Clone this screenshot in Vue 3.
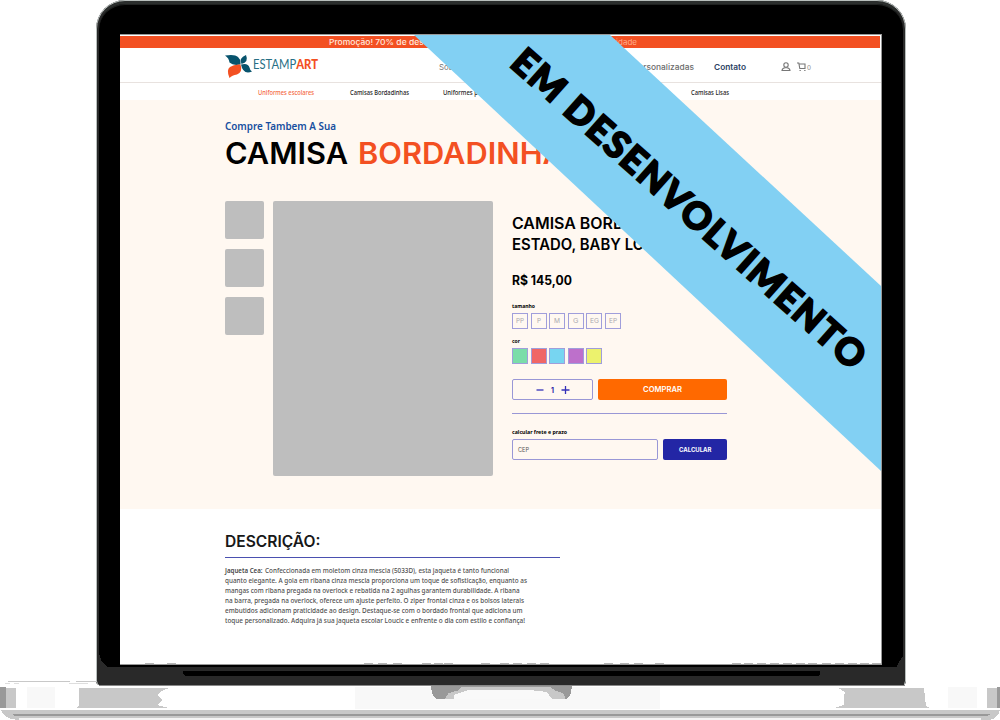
<script setup>
import { h } from 'vue'

// Single line of text fitted to a given width inside a fixed-height line box.
const Fit = (p) =>
  h('svg', { class: 'fit', width: p.w, height: p.lh, style: { display: 'block', overflow: 'visible', flex: 'none' } }, [
    h('text', {
      x: 0, y: p.base, 'font-size': p.size, 'font-weight': p.weight || 400,
      'font-family': p.fam || 'Inter, sans-serif', fill: p.color || '#000',
      textLength: p.w, lengthAdjust: 'spacingAndGlyphs'
    }, p.t)
  ])
Fit.props = ['w', 'lh', 'base', 'size', 'weight', 'fam', 'color', 't']

const cond = '"Noto Sans", sans-serif'
const sizes = [['PP', 8], ['P', 4], ['M', 6], ['G', 5.5], ['EG', 9], ['EP', 8]]
const colors = ['#7bdda9', '#f06666', '#77d5f1', '#bd70cb', '#ecf26d']
const lines = [
  ['quanto elegante. A gola em ribana cinza mescla proporciona um toque de sofisticação, enquanto as', 302],
  ['mangas com ribana pregada na overlock e rebatida na 2 agulhas garantem durabilidade. A ribana', 294.5],
  ['na barra, pregada na overlock, oferece um ajuste perfeito. O ziper frontal cinza e os bolsos laterais', 299],
  ['embutidos adicionam praticidade ao design. Destaque-se com o bordado frontal que adiciona um', 297.5],
  ['toque personalizado. Adquira já sua jaqueta escolar Loucic e enfrente o dia com estilo e confiança!', 300]
]
const specksAt = [145, 167, 364, 378, 393, 422, 434, 444, 481, 500, 513, 527, 540, 604, 620, 634, 655, 732, 744, 757, 770, 783, 796, 808, 822, 835, 848, 860, 872]
</script>

<template>
  <div class="stage">
    <div class="lid">
      <div class="screen">
        <div class="promo">
          <Fit class="promo-a" t="Promoção! 70% de desconto" :w="118" :lh="12" :base="8.800" :size="7.500" weight="500" color="#ffe9df" />
          <Fit class="promo-b" t="na quantidade" :w="54" :lh="12" :base="8.800" :size="7.500" color="#ffae8c" />
        </div>
        <header class="bar">
          <div class="brand">
            <svg width="28" height="24" viewBox="0 0 28 24">
              <path fill="#07536d" d="M0 .5Q10-1 13 2Q16 4.500 15.500 9.500Q8 11 4.500 7.500Q4 3 0 .5Z" />
              <path fill="#07536d" d="M21 0Q24 7 16.500 9Q13.500 3 21 0Z" />
              <path fill="#07536d" d="M16 9.500Q23 7.500 24.500 12.500Q25 15.500 27 16.500Q18 20 16 9.500Z" />
              <path fill="#f35022" d="M15.500 9.500Q18 17 12 19.500Q7 20 4.500 23Q1 15 5 12Q9 9 15.500 9.500Z" />
            </svg>
            <svg width="66" height="20">
              <text x="0" y="13.500" font-family="Lato, sans-serif" font-size="12.500" textLength="65" lengthAdjust="spacingAndGlyphs" fill="#286f85">ESTAMP<tspan font-weight="900" fill="#f35022">ART</tspan></text>
            </svg>
          </div>
          <Fit class="nav-a" t="Sobre" :w="22" :lh="14" :base="10" :size="8" color="#777" />
          <Fit class="nav-b" t="Personalizadas" :w="61" :lh="14" :base="10" :size="8" color="#6c6c6c" weight="500" />
          <Fit class="nav-c" t="Contato" :w="32" :lh="14" :base="10" :size="8" weight="600" color="#2b4364" />
          <svg class="user" width="10" height="10" viewBox="0 0 10 10" fill="none" stroke="#777" stroke-width="1.100">
            <circle cx="5" cy="3" r="2.200" /><path d="M1 8.500Q1.400 6 4 5.800H6Q8.600 6 9 8.500Z" />
          </svg>
          <svg class="cart" width="10" height="10" viewBox="0 0 10 10" fill="none" stroke="#777" stroke-width="1.100">
            <path d="M0 1H1.800L2.800 6.500H8V2H2" /><path d="M2.500 8.500h1.300M7.200 8.500h1.300" />
          </svg>
          <Fit class="count" t="0" :w="4" :lh="10" :base="7.500" :size="6" color="#888" />
        </header>
        <nav class="cats">
          <Fit t="Uniformes escolares" :w="56" :lh="12" :base="8.500" :size="6.800" weight="500" :fam="cond" color="#f4683f" />
          <Fit t="Camisas Bordadinhas" :w="59" :lh="12" :base="8.500" :size="6.800" weight="500" :fam="cond" color="#222" />
          <Fit t="Uniformes profissionais" :w="67" :lh="12" :base="8.500" :size="6.800" weight="500" :fam="cond" color="#222" />
          <Fit class="last" t="Camisas Lisas" :w="38" :lh="12" :base="8.500" :size="6.800" weight="500" :fam="cond" color="#222" />
        </nav>
        <main class="hero">
          <Fit class="kicker" t="Compre Tambem A Sua" :w="111" :lh="16" :base="12" :size="11.500" weight="600" :fam="cond" color="#174fa0" />
          <div class="title">
            <Fit t="CAMISA" :w="123" :lh="36" :base="27" :size="29.500" weight="600" />
            <Fit t="BORDADINHA" :w="207" :lh="36" :base="27" :size="29.500" weight="600" color="#f35022" />
          </div>
          <div class="product">
            <div class="thumbs"><i></i><i></i><i></i></div>
            <div class="photo"></div>
            <div class="info">
              <Fit t="CAMISA BORDADINHA" :w="175" :lh="21" :base="15.700" :size="15.500" weight="600" />
              <Fit t="ESTADO, BABY LOOK" :w="154" :lh="21" :base="15.700" :size="15.500" weight="600" />
              <Fit class="price" t="R$ 145,00" :w="60" :lh="18" :base="13" :size="13" weight="700" />
              <Fit class="lab1" t="tamanho" :w="23" :lh="8" :base="6" :size="5.800" weight="700" :fam="cond" />
              <div class="opts">
                <span v-for="s in sizes" :key="s[0]" class="opt"><Fit :t="s[0]" :w="s[1]" :lh="8" :base="6.300" :size="6.500" color="#aaa9b0" /></span>
              </div>
              <Fit class="lab2" t="cor" :w="8" :lh="8" :base="6" :size="5.800" weight="700" :fam="cond" />
              <div class="opts">
                <span v-for="c in colors" :key="c" class="opt" :style="{ background: c }"></span>
              </div>
              <div class="buy">
                <div class="qty">
                  <svg width="8" height="10"><path d="M.5 5H7.500" stroke="#3430b8" stroke-width="1.300" /></svg>
                  <Fit t="1" :w="3" :lh="10" :base="7.500" :size="7" weight="700" color="#2925a5" />
                  <svg width="9" height="10"><path d="M.5 5H8.500M4.500 1V9" stroke="#3430b8" stroke-width="1.300" /></svg>
                </div>
                <div class="btn orange"><Fit t="COMPRAR" :w="39" :lh="10" :base="7.200" :size="7.500" weight="600" color="#fff" /></div>
              </div>
              <div class="rule"></div>
              <Fit class="lab3" t="calcular frete e prazo" :w="55" :lh="8" :base="6" :size="5.800" weight="700" :fam="cond" />
              <div class="ship">
                <div class="cep"><Fit t="CEP" :w="11" :lh="8" :base="6" :size="5.500" color="#555" /></div>
                <div class="btn blue"><Fit t="CALCULAR" :w="32.500" :lh="8" :base="5.800" :size="6" weight="700" color="#fff" /></div>
              </div>
            </div>
          </div>
        </main>
        <section class="desc">
          <Fit t="DESCRIÇÃO:" :w="95.500" :lh="24" :base="17.200" :size="15.500" weight="600" color="#181818" />
          <div class="line"></div>
          <div class="first">
            <Fit t="Jaqueta Cea:" :w="37.500" :lh="10" :base="7.800" :size="6.500" weight="600" :fam="cond" color="#444" />
            <Fit t="Confeccionada em moletom cinza mescla (5033D), esta jaqueta é tanto funcional" :w="244" :lh="10" :base="7.800" :size="6.500" weight="500" :fam="cond" color="#505050" />
          </div>
          <Fit v-for="l in lines" :key="l[0]" :t="l[0]" :w="l[1]" :lh="10" :base="7.800" :size="6.500" weight="500" :fam="cond" color="#505050" />
        </section>
        <svg class="ribbon" width="761" height="629" viewBox="120 35 761 629">
          <path d="M414 35H610L881 286V471Z" fill="#82d0f3" />
          <text transform="translate(508.500 65.500) rotate(41.700)" x="0" y="0" font-family="Lato, sans-serif" font-weight="900" font-size="37" stroke="#000" stroke-width="1.900" textLength="460" lengthAdjust="spacing">EM DESENVOLVIMENTO</text>
        </svg>
      </div>
    </div>
    <svg class="base" width="1000" height="90" viewBox="0 630 1000 90" shape-rendering="crispEdges">
      <path v-for="x in specksAt" :key="x" :d="`M${x} 663h9v1.500h-9Z`" fill="#b5b5b5" />
      <path d="M120 664H882V665H120Z" fill="#999" />
      <path d="M97 630V675Q97 685 100 685H904Q905 680 905 660V630H903V656L896 667H108Q99 662 99 650V630Z" fill="#292929" />
      <path d="M107 665.500H897V667H107Z" fill="#000" />
      <path d="M183 671H820V674Q820 676 817 676H186Q183 676 183 671Z" fill="#000" />
      <path d="M99 685H905V686H99Z" fill="#888" />
      <path d="M8 681.500H70M76 681.500H97" stroke="#c8c8c8" />
      <path d="M5 683.500H10M14 683.500H19M69 683.500H88" stroke="#dedede" />
      <path d="M0 687H6V708H0ZM997 687H1000V708H997Z" fill="#999" />
      <path d="M6 688H16V708H6ZM987 688H997V708H987Z" fill="#c8c8c8" />
      <path d="M27 687H55V708H27ZM948 687H977V708H948Z" fill="#f8f8f8" />
      <path d="M355 687H660V709H355Z" fill="#f8f8f8" />
      <path d="M79 688H169L162 691L157 695L162 700L157 705L169 708H76L79 706Z" fill="#c8c8c8" />
      <path d="M838 688H924L926 706L930 708H834L844 705V697L845 692Z" fill="#c8c8c8" />
      <path d="M431 686H572Q571 699 565 699H438Q432 699 431 686Z" fill="#999" />
      <path d="M445 699Q446 692 457 691L462 687H550L556 691Q566 693 565 699Z" fill="#c8c8c8" />
      <path d="M454 699V695L468 690H530L547 692L552 699Z" fill="#f9f9f9" />
      <path d="M1 710H1000Q998 718 990 720H18Q4 719 1 710Z" fill="#c8c8c8" />
      <path d="M12 714H991L987 716H14Z" fill="#999" />
      <path d="M17 716H985V717H983V720H19Z" fill="#c8c8c8" />
      <path d="M19 718H981V720H19Z" fill="#f4f4f4" />
    </svg>
  </div>
</template>

<style>
body { background: #fff; }
</style>
<style scoped>
.stage { position: relative; width: 1000px; height: 720px; overflow: hidden; background: #fff; }
.lid { box-sizing: border-box; width: 810px; height: 685px; margin-left: 96px; padding: 33px 21px 0; background: #000; border: 3px solid #292929; border-top: 4px solid #2b2e2d; border-bottom: 0; border-radius: 29px 29px 4px 4px; box-shadow: inset 0 1px #1f2120; outline: 1px solid #b9bfbd; outline-offset: -1px; }
.screen { position: relative; box-sizing: border-box; width: 762px; height: 631px; margin-top: -3px; background: #fff; border-top: 1px solid #999; border-right: 1px solid #999; overflow: hidden; display: flex; flex-direction: column; }
.promo { flex: none; box-sizing: border-box; height: 12px; margin-top: 1px; width: 760px; background: #f35022; display: flex; padding-left: 209px; }
.promo-b { margin-left: 136px; }
.bar { flex: none; box-sizing: border-box; height: 35px; border-bottom: 1px solid #e8e2df; display: flex; align-items: flex-start; padding: 7px 0 0 105px; }
.brand { display: flex; width: 214px; }
.nav-a { margin-top: 5px; }
.nav-b { margin-left: 172px; margin-top: 5px; }
.nav-c { margin-left: 20px; margin-top: 5px; }
.user { margin: 7px 0 0 35px; }
.cart { margin: 7px 0 0 6px; }
.count { margin: 7px 0 0 0; }
.cats { flex: none; box-sizing: border-box; height: 17px; padding: 3px 0 0 138px; display: flex; gap: 36px; }
.cats > :nth-child(3) { margin-left: -2px; }
.cats .last { margin-left: 145px; }
.hero { flex: none; box-sizing: border-box; height: 409px; padding: 18px 0 0 105px; background: #fff8f1; }
.title { display: flex; gap: 10px; margin-top: 3px; }
.product { display: flex; margin-top: 28px; }
.thumbs { width: 39px; display: flex; flex-direction: column; gap: 10px; }
.thumbs i { height: 38px; background: #bebebe; border-radius: 2px; }
.photo { width: 220px; height: 275px; margin-left: 9px; background: #bebebe; border-radius: 2px; }
.info { width: 215px; margin-left: 19px; padding-top: 12px; }
.price { margin-top: 17px; }
.lab1 { margin-top: 12px; }
.opts { display: flex; gap: 2.600px; margin-top: 3px; }
.opt { box-sizing: border-box; width: 16px; height: 16px; border: 1px solid #a09edb; display: flex; align-items: center; justify-content: center; }
.lab2 { margin-top: 8px; }
.buy { display: flex; gap: 5px; margin-top: 15px; }
.qty { box-sizing: border-box; width: 81px; height: 21px; border: 1px solid #9997d6; border-radius: 2px; display: flex; align-items: center; justify-content: center; gap: 7px; }
.btn { display: flex; align-items: center; justify-content: center; border-radius: 2px; }
.orange { width: 129px; background: #ff6900; }
.rule { height: 1px; margin-top: 13px; background: #9997d6; }
.lab3 { margin-top: 14px; }
.ship { display: flex; gap: 5px; margin-top: 3px; }
.cep { box-sizing: border-box; width: 146px; height: 21px; border: 1px solid #9997d6; border-radius: 2px; padding: 6px 5px; }
.blue { width: 64px; background: #2326a5; }
.desc { padding: 21px 0 0 105px; }
.line { width: 335px; height: 1px; margin: 3px 0 7px; background: #4a50b0; }
.first { display: flex; gap: 2px; }
.ribbon { position: absolute; left: 0; top: 0; }
.base { position: absolute; left: 0; top: 630px; }
</style>
